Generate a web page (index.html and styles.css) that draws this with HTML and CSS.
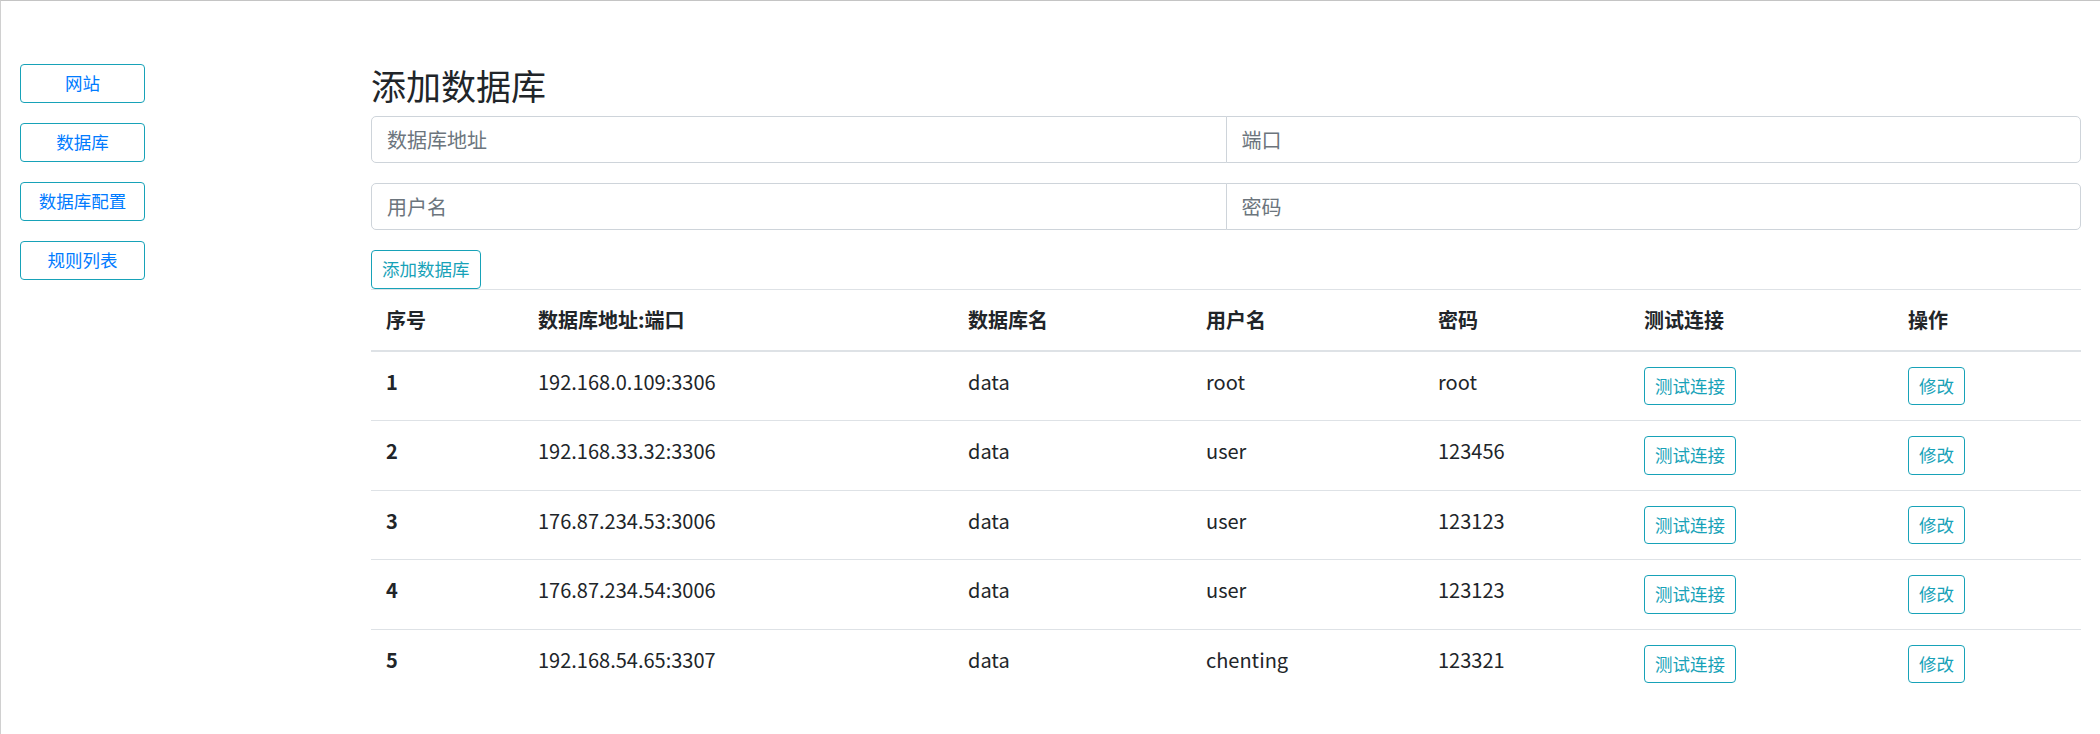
FILE: index.html
```html
<!DOCTYPE html>
<html lang="zh-CN">
<head>
  <meta charset="UTF-8">
  <meta name="viewport" content="width=device-width, initial-scale=1.0">
  <title>添加数据库</title>
  <link rel="stylesheet" href="styles.css">
</head>
<body>
  <div class="layout">
    <div class="side-menu">
      <a class="menu-btn" href="#">网站</a>
      <a class="menu-btn" href="#">数据库</a>
      <a class="menu-btn" href="#">数据库配置</a>
      <a class="menu-btn" href="#">规则列表</a>
    </div>

    <div class="main">
      <h3 class="page-title">添加数据库</h3>
      <div class="input-group">
        <input type="text" placeholder="数据库地址">
        <input type="text" placeholder="端口">
      </div>
      <div class="input-group">
        <input type="text" placeholder="用户名">
        <input type="text" placeholder="密码">
      </div>
      <button class="btn-outline">添加数据库</button>

      <table class="db-table">
        <thead>
          <tr>
            <th>序号</th>
            <th>数据库地址:端口</th>
            <th>数据库名</th>
            <th>用户名</th>
            <th>密码</th>
            <th>测试连接</th>
            <th>操作</th>
          </tr>
        </thead>
        <tbody id="dbList"></tbody>
      </table>
    </div>
  </div>

  <script>
    const dbs = [
      { host: "192.168.0.109:3306", name: "data", user: "root", pwd: "root" },
      { host: "192.168.33.32:3306", name: "data", user: "user", pwd: "123456" },
      { host: "176.87.234.53:3006", name: "data", user: "user", pwd: "123123" },
      { host: "176.87.234.54:3006", name: "data", user: "user", pwd: "123123" },
      { host: "192.168.54.65:3307", name: "data", user: "chenting", pwd: "123321" }
    ];

    const tbody = document.getElementById("dbList");
    dbs.forEach((db, i) => {
      const tr = document.createElement("tr");
      tr.innerHTML = `
        <th>${i + 1}</th>
        <td>${db.host}</td>
        <td>${db.name}</td>
        <td>${db.user}</td>
        <td>${db.pwd}</td>
        <td><button class="btn-outline">测试连接</button></td>
        <td><button class="btn-outline">修改</button></td>`;
      tbody.appendChild(tr);
    });
  </script>
</body>
</html>
```

FILE: styles.css
```css
html, body {
  margin: 0;
  padding: 0;
  background-color: #fff;
  font-family: "Noto Sans CJK SC", "Noto Sans", sans-serif;
  color: #212529;
}

body {
  min-height: 100vh;
  box-sizing: border-box;
  border-top: 1px solid #c4c4c4;
  border-left: 1px solid #d0d0d0;
}

.layout {
  display: flex;
  padding-top: 63px;
}

.side-menu {
  width: 350px;
  flex: none;
  box-sizing: border-box;
  padding-left: 19px;
  display: flex;
  flex-direction: column;
  gap: 20.5px;
}

.menu-btn {
  display: block;
  width: 125px;
  box-sizing: border-box;
  padding: 5px 10px;
  border: 1px solid #17a2b8;
  border-radius: 4px;
  color: #007bff;
  font-size: 17.5px;
  line-height: 26.5px;
  text-align: center;
  text-decoration: none;
}

.main {
  flex: 1;
  min-width: 0;
  padding: 0 19px 0 20px;
}

.page-title {
  margin: 0 0 10px;
  font-size: 35px;
  font-weight: 400;
  line-height: 1.2;
}

.input-group {
  display: flex;
  margin-bottom: 20px;
}

.input-group input {
  flex: 1 1 0;
  min-width: 0;
  height: 47px;
  box-sizing: border-box;
  padding: 7.5px 15px;
  font-family: inherit;
  font-size: 20px;
  line-height: 30px;
  color: #495057;
  border: 1px solid #ced4da;
  border-radius: 5px 0 0 5px;
  outline: none;
}

.input-group input + input {
  margin-left: -1px;
  border-radius: 0 5px 5px 0;
}

.input-group input::placeholder {
  color: #6c757d;
}

.btn-outline {
  padding: 5px 10px;
  font-family: inherit;
  font-size: 17.5px;
  line-height: 26.5px;
  color: #17a2b8;
  background: transparent;
  border: 1px solid #17a2b8;
  border-radius: 4px;
  cursor: pointer;
  display: block;
  white-space: nowrap;
}

.db-table {
  width: 100%;
  border-collapse: collapse;
  table-layout: fixed;
  font-size: 20px;
  line-height: 30px;
}

.db-table th,
.db-table td {
  padding: 15px;
  text-align: left;
  vertical-align: top;
  border-top: 1px solid #dee2e6;
  box-sizing: border-box;
}

.db-table th {
  font-weight: 700;
}

.db-table thead th {
  border-bottom: 2px solid #dee2e6;
}

.db-table td {
  font-weight: 400;
}

/* 欄寬依截圖量出 */
.db-table th:nth-child(1) { width: 152px; }
.db-table th:nth-child(2) { width: 430px; }
.db-table th:nth-child(3) { width: 238px; }
.db-table th:nth-child(4) { width: 232px; }
.db-table th:nth-child(5) { width: 206px; }
.db-table th:nth-child(6) { width: 264px; }
```
